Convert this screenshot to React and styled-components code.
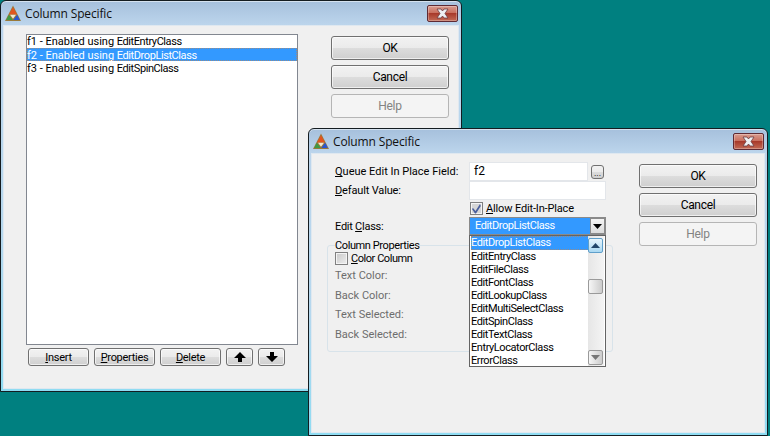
import React from 'react';
import styled, { createGlobalStyle } from 'styled-components';

const Global = createGlobalStyle`
  html, body { margin: 0; padding: 0; background: #008080; overflow: hidden; }
  body { font: 11px/13px Roboto, "Liberation Sans", Arial, sans-serif; color: #000; }
  #root { width: 770px; height: 436px; }
`;

const Desktop = styled.div`
  position: relative;
  width: 770px;
  height: 436px;
  overflow: hidden;
  background: #008080;
`;

const Win = styled.section`
  position: absolute;
  left: ${p => p.$left}px;
  top: ${p => p.$top}px;
  width: ${p => p.$w}px;
  height: ${p => p.$h}px;
  box-sizing: border-box;
  display: flex;
  flex-direction: column;
  border: 1px solid #141c20;
  border-radius: 6px 6px 0 0;
  padding: 0 2px 2px;
  background: linear-gradient(#a6c0dc 0, #bcd5ec 24px, #b6d8ee 60%, #8fdcf2 100%);
  box-shadow: inset 0 1px 0 #d5e2ef;
`;

const TitleBar = styled.header`
  flex: none;
  height: 24px;
  display: flex;
  align-items: flex-start;
  gap: 4px;
  padding-left: 2px;
  padding-right: 1px;
`;

const AppIcon = styled.svg`
  flex: none;
  width: 16px;
  height: 17px;
  margin-top: 4px;
`;

const TitleText = styled.h1`
  margin: 5px 0 0;
  font: 400 12px/16px "Open Sans", "Noto Sans", sans-serif;
  letter-spacing: -0.15px;
  color: #101010;
`;

const CloseBtn = styled.div`
  margin-left: auto;
  margin-top: 4px;
  width: 31px;
  height: 17px;
  box-sizing: border-box;
  border: 1px solid #5e2a33;
  border-radius: 2px;
  background: linear-gradient(#d99c8f 0, #c9705f 45%, #a83a2b 50%, #c26a55 100%);
  box-shadow: inset 0 0 0 1px rgba(255,255,255,.28);
  display: flex;
  align-items: center;
  justify-content: center;
`;

const Body = styled.div`
  flex: 1;
  min-height: 0;
  display: flex;
  background: #f0f0f0;
  padding: ${p => p.$pt}px 0 0 ${p => p.$pl}px;
  gap: ${p => p.$gap}px;
  outline: 1px solid #dfe8f0;
  outline-offset: -1px;
`;

const LeftCol = styled.div`
  width: 272px;
  display: flex;
  flex-direction: column;
`;

const ListBox = styled.div`
  width: 272px;
  height: 311px;
  box-sizing: border-box;
  border: 1px solid #828790;
  background: #fff;
`;

const ListRow = styled.div`
  height: 13px;
  line-height: ${p => (p.$first ? 13 : 15)}px;
  white-space: pre;
  background: ${p => (p.$sel ? '#3399ff' : 'transparent')};
  color: ${p => (p.$sel ? '#fff' : '#000')};
  outline: ${p => (p.$sel ? '1px dotted rgba(214, 130, 60, .6)' : 'none')};
  outline-offset: -1px;
`;

const ClassName = styled.span`
  letter-spacing: -0.42px;
`;

const Toolbar = styled.div`
  display: flex;
  gap: 5px;
  margin-top: 3px;
  padding-left: 2px;
  letter-spacing: -0.3px;
`;

const Btn = styled.div`
  box-sizing: border-box;
  width: ${p => p.$w}px;
  height: ${p => p.$h}px;
  display: flex;
  align-items: center;
  justify-content: center;
  border: 1px solid ${p => (p.$off ? '#b5b5b5' : '#707070')};
  border-radius: 3px;
  color: ${p => (p.$off ? '#838383' : '#000')};
  background: ${p => (p.$off ? '#f4f4f4' : 'linear-gradient(#f2f2f2 0, #ebebeb 49%, #dddddd 50%, #cfcfcf 100%)')};
  box-shadow: inset 0 0 0 1px ${p => (p.$off ? '#f4f4f4' : 'rgba(255,255,255,.65)')};
  font-size: ${p => (p.$big ? 12 : 11)}px;
  letter-spacing: ${p => (p.$big ? '-0.3px' : 'inherit')};
`;

const ButtonCol = styled.div`
  width: 118px;
  margin-top: 2px;
  display: flex;
  flex-direction: column;
  gap: 5px;
`;

const Form = styled.div`
  width: 286px;
  display: flex;
  flex-direction: column;
`;

const FieldRow = styled.div`
  height: ${p => p.$h}px;
  margin-top: ${p => p.$mt || 0}px;
  padding-left: 8px;
  display: flex;
  align-items: center;
  position: relative;
`;

const FieldLabel = styled.span`
  width: 134px;
  flex: none;
  white-space: pre;
  letter-spacing: ${p => p.$ls || 0}px;
`;

const TextInput = styled.div`
  box-sizing: border-box;
  width: ${p => p.$w}px;
  height: 19px;
  padding: 2px 0 0 4px;
  border: 1px solid #e3e6ea;
  background: #fff;
  font-size: 12px;
`;

const DotsBtn = styled.div`
  box-sizing: border-box;
  width: 13px;
  height: 14px;
  margin-left: 3px;
  border: 1px solid #707070;
  border-radius: 3px;
  background: linear-gradient(#f2f2f2 0, #ebebeb 49%, #dddddd 50%, #cfcfcf 100%);
  font-size: 9px;
  line-height: 15px;
  text-align: center;
`;

const CheckRow = styled.label`
  display: flex;
  align-items: center;
  gap: 3px;
  height: 13px;
  margin-left: ${p => p.$ml}px;
  margin-top: ${p => p.$mt}px;
  white-space: pre;
  letter-spacing: ${p => p.$ls}px;
`;

const CheckBox = styled.span`
  box-sizing: border-box;
  flex: none;
  width: 13px;
  height: 13px;
  border: 1px solid #808080;
  background: ${p => (p.$on ? '#d6d6d6' : 'linear-gradient(135deg, #c8c8c8, #eeeeee)')};
  box-shadow: inset 0 0 0 1px #f4f4f4;
  display: flex;
  align-items: center;
  justify-content: center;
`;

const Combo = styled.div`
  position: relative;
  box-sizing: border-box;
  width: 137px;
  height: 18px;
  border: 1px solid #8a8a8a;
  background: #3399ff;
  color: #fff;
  padding: 1px 0 0 5px;
  line-height: 14px;
`;

const ComboArrow = styled.div`
  position: absolute;
  right: 0;
  top: 0;
  width: 15px;
  height: 16px;
  box-sizing: border-box;
  border: 1px solid #8a8a8a;
  background: linear-gradient(#f4f4f4, #dcdcdc);
  display: flex;
  align-items: center;
  justify-content: center;
`;

const DropList = styled.div`
  position: absolute;
  z-index: 5;
  left: -1px;
  top: 17px;
  width: 137px;
  height: 132px;
  box-sizing: border-box;
  border: 1px solid #646464;
  background: #fff;
  color: #000;
  padding-left: 1px;
`;

const DropRow = styled.div`
  width: 118px;
  height: ${p => (p.$sel ? 14 : 13)}px;
  line-height: 13px;
  white-space: pre;
  letter-spacing: -0.42px;
  background: ${p => (p.$sel ? '#3399ff' : 'transparent')};
  color: ${p => (p.$sel ? '#fff' : '#000')};
  outline: ${p => (p.$sel ? '1px dotted rgba(214, 130, 60, .6)' : 'none')};
  outline-offset: -1px;
`;

const ScrollBar = styled.div`
  position: absolute;
  top: 0;
  right: 1px;
  bottom: 0;
  width: 16px;
  box-sizing: border-box;
  padding: 2px 0 1px;
  background: linear-gradient(90deg, #e6e6e6, #f4f4f4);
  display: flex;
  flex-direction: column;
  justify-content: space-between;
`;

const ScrollBtn = styled.div`
  box-sizing: border-box;
  width: 15px;
  height: 15px;
  border: 1px solid ${p => (p.$hot ? '#5f9fca' : '#9a9a9a')};
  border-radius: 2px;
  background: ${p => (p.$hot ? 'linear-gradient(#e8f5fc, #a9d8f2)' : 'linear-gradient(90deg, #f6f6f6, #cccccc)')};
  display: flex;
  align-items: center;
  justify-content: center;
`;

const ScrollThumb = styled(ScrollBtn)`
  position: absolute;
  top: 43px;
`;

const Group = styled.fieldset`
  margin: 4px 0 0;
  padding: 0 0 0 7px;
  height: 113px;
  box-sizing: border-box;
  border: 1px solid #d8e3ea;
  border-radius: 3px;
  min-width: 0;
`;

const GroupTitle = styled.legend`
  padding: 0;
  margin-left: 0;
  line-height: 13px;
  letter-spacing: -0.4px;
`;

const MutedRows = styled.div`
  margin-top: 4px;
  display: grid;
  grid-auto-rows: 13px;
  row-gap: 6.6px;
  color: #6d6d6d;
`;

function Logo() {
  return (
    <AppIcon viewBox="0 0 16 17">
      <path d="M8 .6 L16 16 H0 Z" fill="#9a7a3a" />
      <path d="M8 2.2 L12 9.4 H4 Z" fill="#e2551f" />
      <path d="M3.8 9.8 L7.7 15 H1.2 Z" fill="#3f9a45" />
      <path d="M12.2 9.8 L14.8 15 H8.3 Z" fill="#2a56d0" />
      <path d="M5 9.8 H11 L8 13.8 Z" fill="#efe9d4" />
    </AppIcon>
  );
}

function CloseGlyph() {
  return (
    <svg width="15" height="11" viewBox="0 0 15 11">
      <path d="M2 1 H6 L7.5 3 L9 1 H13 L10 5.5 L13 10 H9 L7.5 8 L6 10 H2 L5 5.5 Z" fill="#eef0f2" stroke="#6b3a40" strokeWidth=".8" />
    </svg>
  );
}

function Arrow({ down }) {
  return (
    <svg width="12" height="10" viewBox="0 0 12 10">
      <path d={down ? 'M4 0 H8 V4 H12 L6 10 L0 4 H4 Z' : 'M4 10 H8 V6 H12 L6 0 L0 6 H4 Z'} fill="#000" />
    </svg>
  );
}

function Tri({ up, color = '#000' }) {
  return (
    <svg width="9" height="5" viewBox="0 0 9 5">
      <path d={up ? 'M0 5 H9 L4.5 0 Z' : 'M0 0 H9 L4.5 5 Z'} fill={color} />
    </svg>
  );
}

function Check() {
  return (
    <svg width="11" height="11" viewBox="0 0 11 11">
      <path d="M2 5 L4.5 8 L9 1 L9.8 3 L5 10.4 H4 L1 6 Z" fill="#4a5f9c" />
    </svg>
  );
}

function DialogFrame({ left, top, w, h, children }) {
  return (
    <Win $left={left} $top={top} $w={w} $h={h}>
      <TitleBar>
        <Logo />
        <TitleText>Column Specific</TitleText>
        <CloseBtn><CloseGlyph /></CloseBtn>
      </TitleBar>
      {children}
    </Win>
  );
}

function DialogButtons() {
  return (
    <ButtonCol>
      <Btn $w={118} $h={24} $big>OK</Btn>
      <Btn $w={118} $h={24} $big>Cancel</Btn>
      <Btn $w={118} $h={24} $big $off>Help</Btn>
    </ButtonCol>
  );
}

const classes = ['EditDropListClass', 'EditEntryClass', 'EditFileClass', 'EditFontClass', 'EditLookupClass', 'EditMultiSelectClass', 'EditSpinClass', 'EditTextClass', 'EntryLocatorClass', 'ErrorClass'];

export default function App() {
  return (
    <Desktop>
      <Global />
      <DialogFrame left={0} top={0} w={462} h={392}>
        <Body $pt={9} $pl={23} $gap={33}>
          <LeftCol>
            <ListBox>
              <ListRow $first>f1 - Enabled using <ClassName>EditEntryClass</ClassName></ListRow>
              <ListRow $sel>f2 - Enabled using <ClassName>EditDropListClass</ClassName></ListRow>
              <ListRow>f3 - Enabled using <ClassName>EditSpinClass</ClassName></ListRow>
            </ListBox>
            <Toolbar>
              <Btn $w={61} $h={18}><span><u>I</u>nsert</span></Btn>
              <Btn $w={61} $h={18}><span><u>P</u>roperties</span></Btn>
              <Btn $w={61} $h={18}><span><u>D</u>elete</span></Btn>
              <Btn $w={27} $h={18}><Arrow /></Btn>
              <Btn $w={27} $h={18}><Arrow down /></Btn>
            </Toolbar>
          </LeftCol>
          <DialogButtons />
        </Body>
      </DialogFrame>

      <DialogFrame left={308} top={128} w={460} h={308}>
        <Body $pt={9} $pl={16} $gap={26}>
          <Form>
            <FieldRow $h={19}>
              <FieldLabel><u>Q</u>ueue Edit In Place Field:</FieldLabel>
              <TextInput $w={119}>f2</TextInput>
              <DotsBtn>...</DotsBtn>
            </FieldRow>
            <FieldRow $h={19}>
              <FieldLabel $ls={-0.15}><u>D</u>efault Value:</FieldLabel>
              <TextInput $w={137} />
            </FieldRow>
            <CheckRow $ml={143} $mt={2} $ls={-0.15}>
              <CheckBox $on><Check /></CheckBox>
              <span><u>A</u>llow Edit-In-Place</span>
            </CheckRow>
            <FieldRow $h={18} $mt={2}>
              <FieldLabel $ls={-0.25}>Edit <u>C</u>lass:</FieldLabel>
              <Combo>
                <ClassName>EditDropListClass</ClassName>
                <ComboArrow><Tri /></ComboArrow>
                <DropList>
                  {classes.map((c, i) => <DropRow key={c} $sel={i === 0}>{c}</DropRow>)}
                  <ScrollBar>
                    <ScrollBtn $hot><Tri up color="#22466a" /></ScrollBtn>
                    <ScrollThumb />
                    <ScrollBtn><Tri color="#777" /></ScrollBtn>
                  </ScrollBar>
                </DropList>
              </Combo>
            </FieldRow>
            <Group>
              <GroupTitle>Column Properties</GroupTitle>
              <CheckRow $ml={0} $mt={0} $ls={-0.45}>
                <CheckBox />
                <span><u>C</u>olor Column</span>
              </CheckRow>
              <MutedRows>
                <span>Text Color:</span>
                <span>Back Color:</span>
                <span>Text Selected:</span>
                <span>Back Selected:</span>
              </MutedRows>
            </Group>
          </Form>
          <DialogButtons />
        </Body>
      </DialogFrame>
    </Desktop>
  );
}
